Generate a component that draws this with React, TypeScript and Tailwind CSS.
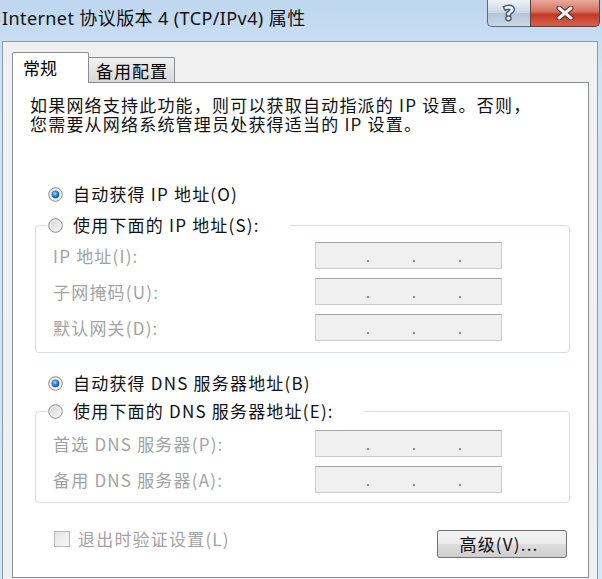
import React from 'react';

const font = "font-['Noto_Sans_CJK_SC','Noto_Sans',sans-serif]";

const Radio = ({ checked }: { checked?: boolean }) => (
  <svg width="15" height="15" viewBox="0 0 15 15" className="shrink-0">
    <defs>
      <linearGradient id="rOff" x1="0" y1="0" x2="1" y2="1">
        <stop offset="0" stopColor="#d0d0d0" />
        <stop offset="1" stopColor="#fbfbfb" />
      </linearGradient>
      <radialGradient id="rDot" cx="0.4" cy="0.35" r="0.7">
        <stop offset="0" stopColor="#a9dcfb" />
        <stop offset="0.5" stopColor="#2f8ad6" />
        <stop offset="1" stopColor="#0f4a86" />
      </radialGradient>
    </defs>
    <circle cx="7.5" cy="7.5" r="6.8" fill="url(#rOff)" stroke="#8c8e90" strokeWidth="1" />
    <circle cx="7.5" cy="7.5" r="5.3" fill="none" stroke="#f4f4f4" strokeWidth="1" />
    {checked && <circle cx="7.5" cy="7.5" r="3.6" fill="url(#rDot)" stroke="#1f5a8e" strokeWidth="0.6" />}
  </svg>
);

const IpBox = () => (
  <div className="w-[187px] h-[27px] bg-[#f0f0f0] border border-[#cdcdcd] border-t-[#a9a9a9] flex items-end pb-[6px] pl-[51px] gap-[44px]">
    <span className="w-[2px] h-[2px] bg-[#8a8a8a]" />
    <span className="w-[2px] h-[2px] bg-[#8a8a8a]" />
    <span className="w-[2px] h-[2px] bg-[#8a8a8a]" />
  </div>
);

const Row = ({ label }: { label: string }) => (
  <div className="flex items-center">
    <div className="w-[279px] pl-[17px] text-[#a3a3a3]">{label}</div>
    <IpBox />
  </div>
);

export default function App() {
  return (
    <div className={`w-[602px] h-[579px] overflow-hidden flex flex-col bg-[linear-gradient(180deg,#bed6ee_0%,#cfe3f6_12%,#d6e8f8_100%)] ${font}`}>
      {/* title bar */}
      <div className="h-[41px] shrink-0 flex justify-between items-start">
        <div className="pl-[2px] pt-[7px] text-[18px] leading-[22px] tracking-[0.4px] text-[#111] font-['Noto_Sans','Noto_Sans_CJK_SC',sans-serif]">
          Internet 协议版本 4 (TCP/IPv4) 属性
        </div>
        <div className="flex mr-[2px]">
          <div className="w-[43px] h-[27px] rounded-bl-[5px] border border-t-0 border-r-0 border-[#5b6b7c] bg-[linear-gradient(180deg,#eef3f8,#c9d6e3_50%,#b4c5d6_51%,#c8d8e6)] flex items-center justify-center">
            <span className="text-[20px] leading-[24px] font-bold text-[#eef2f6] font-['Noto_Sans',sans-serif] [-webkit-text-stroke:3px_#4b5866] [paint-order:stroke_fill]">
              ?
            </span>
          </div>
          <div className="w-[70px] h-[27px] rounded-br-[5px] border border-t-0 border-[#5b4040] bg-[linear-gradient(180deg,#e9a99b,#d4705f_45%,#c33a26_55%,#d9604a)] flex items-center justify-center">
            <svg width="18" height="14" viewBox="0 0 18 14">
              <path d="M3 2 L15 12 M15 2 L3 12" stroke="#3d2b2b" strokeWidth="5" strokeLinecap="round" />
              <path d="M3 2 L15 12 M15 2 L3 12" stroke="#f4f4f4" strokeWidth="3" strokeLinecap="round" />
            </svg>
          </div>
        </div>
      </div>

      {/* window body */}
      <div className="flex-1 ml-[2px] mr-[4px] bg-[#f0f0f0] border border-b-0 border-[#8f9ba7] pl-[9px] pr-[8px] pt-[10px] flex flex-col">
        {/* tabs */}
        <div className="flex items-end h-[31px] -mb-px relative z-10">
          <div className="w-[77px] h-[31px] bg-white border border-b-0 border-[#898c95] rounded-t-[2px] text-[17px] pl-[10px] pt-[4px] leading-[22px]">
            常规
          </div>
          <div className="w-[86px] h-[26px] border border-l-0 border-[#898c95] rounded-tr-[2px] bg-[linear-gradient(180deg,#f2f2f2,#e4e4e4_50%,#d9d9d9)] text-[17px] pl-[7px] pt-[2px] leading-[22px] tracking-[1px]">
            备用配置
          </div>
        </div>

        {/* panel */}
        <div className="flex-1 mb-[1px] bg-white border border-[#898c95] flex flex-col text-[17px] leading-[20px] tracking-[1.2px] text-[#111]">
          <div className="ml-[17px] mt-[12px] flex flex-col leading-[19px]">
            <div>如果网络支持此功能，则可以获取自动指派的 IP 设置。否则，</div>
            <div>您需要从网络系统管理员处获得适当的 IP 设置。</div>
          </div>

          <div className="ml-[22px] mr-[18px] flex flex-col">
            <div className="mt-[51px] h-[20px] flex items-center gap-[10px] pl-[13px]">
              <Radio checked />
              <span>自动获得 IP 地址(O)</span>
            </div>

            <fieldset className="mt-[11px] border border-[#d5dfe5] rounded-[4px] pb-[11px]">
              <legend className="ml-[11px] pr-[30px] h-[20px] flex items-center gap-[10px] pl-[1px]">
                <Radio />
                <span>使用下面的 IP 地址(S):</span>
              </legend>
              <div className="mt-[7px] flex flex-col gap-[9px]">
                <Row label="IP 地址(I):" />
                <Row label="子网掩码(U):" />
                <Row label="默认网关(D):" />
              </div>
            </fieldset>

            <div className="mt-[20px] h-[20px] flex items-center gap-[10px] pl-[13px]">
              <Radio checked />
              <span>自动获得 DNS 服务器地址(B)</span>
            </div>

            <fieldset className="mt-[8px] border border-[#d5dfe5] rounded-[4px] pb-[9px]">
              <legend className="ml-[11px] pr-[30px] h-[20px] flex items-center gap-[10px] pl-[1px]">
                <Radio />
                <span>使用下面的 DNS 服务器地址(E):</span>
              </legend>
              <div className="mt-[9px] flex flex-col gap-[9px]">
                <Row label="首选 DNS 服务器(P):" />
                <Row label="备用 DNS 服务器(A):" />
              </div>
            </fieldset>

            <div className="mt-[27px] flex items-start justify-between pl-[19px] pr-[3px]">
              <div className="mt-[-1px] flex items-center gap-[8px] text-[#a3a3a3]">
                <span className="w-[16px] h-[16px] border border-[#b8b8b8] bg-[linear-gradient(135deg,#e4e4e4,#f8f8f8)]" />
                <span>退出时验证设置(L)</span>
              </div>
              <button className="w-[130px] h-[28px] rounded-[3px] border border-[#707070] bg-[linear-gradient(180deg,#f4f4f4,#ebebeb_50%,#dddddd_51%,#cfcfcf)] text-[17px] text-[#111] flex items-center justify-center pr-[6px]">
                高级(V)...
              </button>
            </div>
          </div>
        </div>
      </div>
    </div>
  );
}
